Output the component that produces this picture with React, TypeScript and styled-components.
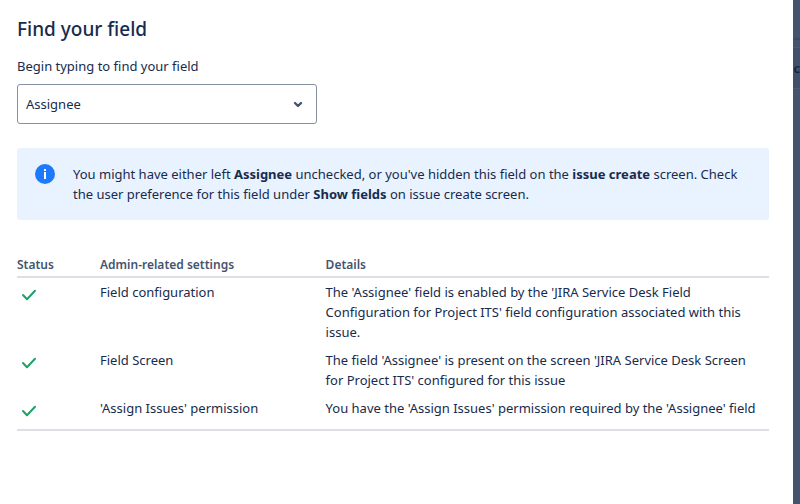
import React from "react";
import styled, { createGlobalStyle } from "styled-components";

const GlobalStyle = createGlobalStyle`
  *, *::before, *::after { box-sizing: border-box; }
  body {
    margin: 0;
    background: #44546f;
    color: #172b4d;
    font-family: "Noto Sans", "Segoe UI", sans-serif;
    font-size: 13px;
    line-height: 20px;
  }
`;

const Page = styled.div`
  display: flex;
  min-height: 100vh;
  overflow: hidden;
`;

const Dialog = styled.main`
  flex: 1;
  min-width: 0;
  padding: 17px 24px 24px 17px;
  background: #ffffff;
`;

const Backdrop = styled.aside`
  display: flex;
  flex-direction: column;
  flex: 0 0 7px;
  min-width: 0;
  overflow: hidden;
  background: #44546f;
`;

const BackdropBar = styled.div`
  height: 40px;
  border-bottom: 2px solid #3d4b69;
`;

const BackdropHeading = styled.div`
  display: flex;
  justify-content: flex-end;
  align-items: center;
  height: 42px;
  margin-top: 7px;
  border-top: 1px solid #4b5b78;
  border-bottom: 1px solid #4b5b78;
  background: #40506c;
  color: #14233f;
  font-size: 13px;
  font-weight: 600;
`;

const Title = styled.h1`
  margin: 0 0 15px;
  font-size: 19px;
  font-weight: 500;
  line-height: 24px;
`;

const Label = styled.label`
  display: block;
  margin-bottom: 8px;
`;

const SelectBox = styled.div`
  position: relative;
  max-width: 300px;
`;

const Select = styled.select`
  display: block;
  width: 100%;
  height: 40px;
  padding: 0 40px 0 8px;
  border: 1px solid #8590a2;
  border-radius: 3px;
  appearance: none;
  background: #ffffff;
  color: inherit;
  font: inherit;
`;

const Chevron = styled.svg`
  position: absolute;
  top: 8px;
  right: 7px;
  pointer-events: none;
`;

const Banner = styled.section`
  display: flex;
  gap: 16px;
  margin: 24px 0 35px;
  padding: 16px;
  border-radius: 3px;
  background: #e9f2ff;
`;

const BannerIcon = styled.svg`
  flex: none;
`;

const BannerText = styled.p`
  margin: 0;
`;

const Table = styled.table`
  width: 100%;
  border-collapse: separate;
  border-spacing: 0;
  border-bottom: 2px solid #dcdfe4;
  table-layout: fixed;
`;

const HeadCell = styled.th<{ $width?: string }>`
  width: ${({ $width }) => $width ?? "auto"};
  padding: 0 0 1px;
  border-bottom: 2px solid #dcdfe4;
  color: #44546f;
  font-size: 12px;
  font-weight: 600;
  text-align: left;
`;

const Cell = styled.td`
  height: 35px;
  padding: 4px 4px 4px 0;
  vertical-align: top;
`;

const CheckIcon = styled.svg`
  display: block;
`;

const rows = [
  {
    setting: "Field configuration",
    details:
      "The 'Assignee' field is enabled by the 'JIRA Service Desk Field Configuration for Project ITS' field configuration associated with this issue.",
  },
  {
    setting: "Field Screen",
    details:
      "The field 'Assignee' is present on the screen 'JIRA Service Desk Screen for Project ITS' configured for this issue",
  },
  {
    setting: "'Assign Issues' permission",
    details: "You have the 'Assign Issues' permission required by the 'Assignee' field",
  },
];

function Check() {
  return (
    <CheckIcon width="24" height="24" viewBox="0 0 24 24" role="img" aria-label="Passed">
      <path
        d="M6 13l4 4.3L18 8.8"
        fill="none"
        stroke="#22a06b"
        strokeWidth="2"
        strokeLinecap="round"
        strokeLinejoin="round"
      />
    </CheckIcon>
  );
}

export default function App() {
  return (
    <>
      <GlobalStyle />
      <Page>
        <Dialog>
          <Title>Find your field</Title>
          <Label htmlFor="field">Begin typing to find your field</Label>
          <SelectBox>
            <Select id="field" defaultValue="Assignee">
              <option>Assignee</option>
            </Select>
            <Chevron width="24" height="24" viewBox="0 0 24 24" aria-hidden="true">
              <path
                d="M9 11l3 3 3-3"
                fill="none"
                stroke="#44546f"
                strokeWidth="2.4"
                strokeLinecap="round"
                strokeLinejoin="round"
              />
            </Chevron>
          </SelectBox>
          <Banner>
            <BannerIcon width="24" height="20" viewBox="0 0 24 20" aria-hidden="true">
              <circle cx="12" cy="10" r="10" fill="#1d7afc" />
              <rect x="11" y="5" width="2" height="2" fill="#ffffff" />
              <rect x="11" y="8" width="2" height="7" fill="#ffffff" />
            </BannerIcon>
            <BannerText>
              You might have either left <strong>Assignee</strong> unchecked, or you've hidden this
              field on the <strong>issue create</strong> screen. Check the user preference for this
              field under <strong>Show fields</strong> on issue create screen.
            </BannerText>
          </Banner>
          <Table>
            <thead>
              <tr>
                <HeadCell scope="col" $width="83px">Status</HeadCell>
                <HeadCell scope="col" $width="30%">Admin-related settings</HeadCell>
                <HeadCell scope="col">Details</HeadCell>
              </tr>
            </thead>
            <tbody>
              {rows.map((row) => (
                <tr key={row.setting}>
                  <Cell><Check /></Cell>
                  <Cell>{row.setting}</Cell>
                  <Cell>{row.details}</Cell>
                </tr>
              ))}
            </tbody>
          </Table>
        </Dialog>
        <Backdrop aria-hidden="true">
          <BackdropBar />
          <BackdropHeading>c</BackdropHeading>
        </Backdrop>
      </Page>
    </>
  );
}
